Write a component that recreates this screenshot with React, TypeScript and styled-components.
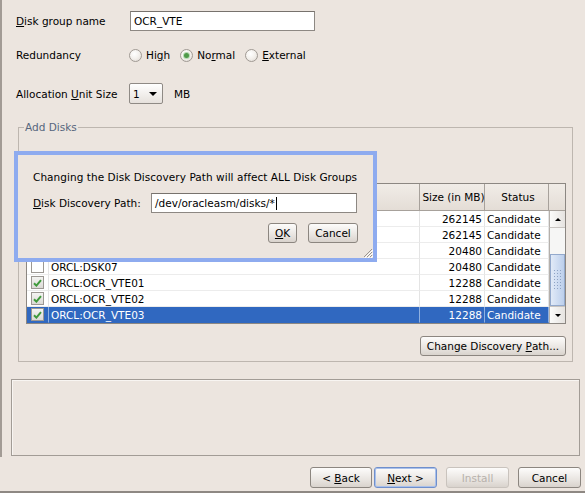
import React from "react";
import styled, { createGlobalStyle, css } from "styled-components";

const BG = "#ece5df";

const Global = createGlobalStyle`
  html, body { margin: 0; padding: 0; background: ${BG}; }
  body { font-family: "DejaVu Sans", "Liberation Sans", sans-serif; font-size: 10.5px; color: #000; }
  * { box-sizing: border-box; }
`;

const Window = styled.div`
  position: relative;
  width: 585px;
  height: 493px;
  background: ${BG};
  display: flex;
  flex-direction: column;
  border-bottom: 2px solid #8e8883;
  overflow: hidden;
`;

const Content = styled.div`
  border-left: 2px solid #a29b95;
  padding: 11px 0 1px 0;
  display: flex;
  flex-direction: column;
`;

const FormRow = styled.div<{ $top?: number; $h?: number }>`
  display: flex;
  align-items: center;
  margin: ${(p) => p.$top ?? 0}px 0 0 14px;
  height: ${(p) => p.$h ?? 20}px;
`;

const Label = styled.span<{ $w: number }>`
  width: ${(p) => p.$w}px;
  flex: none;
  white-space: nowrap;
`;

const U = styled.span`
  text-decoration: underline;
  text-underline-offset: 1px;
`;

const TextField = styled.div<{ $w: number }>`
  width: ${(p) => p.$w}px;
  height: 20px;
  background: #fff;
  border: 1px solid #8d8883;
  border-top-color: #77726d;
  padding: 0 3px;
  display: flex;
  align-items: center;
  white-space: nowrap;
`;

const Caret = styled.span`
  display: inline-block;
  width: 1px;
  height: 13px;
  background: #000;
  margin-left: 1px;
`;

const RadioGroup = styled.div`
  display: flex;
  align-items: center;
  gap: 10px;
`;

const RadioItem = styled.label`
  display: flex;
  align-items: center;
  gap: 4px;
`;

const RadioCircle = styled.span<{ $on?: boolean }>`
  width: 13px;
  height: 13px;
  border-radius: 50%;
  border: 1px solid #a09a94;
  background: radial-gradient(circle at 40% 35%, #ffffff 0%, #f3f0ec 50%, #dcd6d0 100%);
  display: flex;
  align-items: center;
  justify-content: center;
  ${(p) =>
    p.$on &&
    css`
      &::after {
        content: "";
        width: 5px;
        height: 5px;
        border-radius: 50%;
        background: #4f9a4a;
        box-shadow: 0 0 0 1px #b6dab2;
      }
    `}
`;

const Combo = styled.div`
  width: 34px;
  height: 21px;
  border: 1px solid #8f8a85;
  border-radius: 2px;
  background: linear-gradient(#ffffff, #e6e1dc);
  display: flex;
  align-items: center;
  justify-content: space-between;
  padding: 0 5px 0 3px;
  margin-right: 11px;
`;

const Tri = styled.span<{ $up?: boolean; $s?: number }>`
  width: 0;
  height: 0;
  border-left: ${(p) => p.$s ?? 4}px solid transparent;
  border-right: ${(p) => p.$s ?? 4}px solid transparent;
  ${(p) =>
    p.$up
      ? css`border-bottom: ${p.$s ?? 4}px solid #000;`
      : css`border-top: ${p.$s ?? 4}px solid #000;`}
`;

const Group = styled.fieldset`
  margin: 17px 0 0 16px;
  width: 555px;
  border: 1px solid #bdb6af;
  padding: 0 6px 5px 7px;
  min-width: 0;
`;

const Legend = styled.legend`
  color: #56657d;
  padding: 0 1px;
  margin-left: -2px;
  line-height: 13px;
`;

const TableFrame = styled.div`
  margin-top: 49px;
  width: 540px;
  border: 1px solid #8c8782;
  display: flex;
  background: #fff;
`;

const TableMain = styled.div`
  display: flex;
  flex-direction: column;
  width: 522px;
`;

const cols = "22px 371px 65px 64px";

const HeaderRow = styled.div`
  display: grid;
  grid-template-columns: ${cols};
  height: 27px;
`;

const HeaderCell = styled.div`
  background: linear-gradient(#f1ece7, #e4ddd6);
  border-right: 1px solid #a7a19b;
  border-bottom: 1px solid #a7a19b;
  display: flex;
  align-items: center;
  justify-content: center;
  white-space: nowrap;
  padding-left: 3px;
`;

const BodyRow = styled.div<{ $sel?: boolean }>`
  display: grid;
  grid-template-columns: ${cols};
  height: 16px;
  background: ${(p) => (p.$sel ? "#3068c0" : "#fff")};
  color: ${(p) => (p.$sel ? "#fff" : "#000")};
`;

const Cell = styled.div<{ $align?: "left" | "right" | "center"; $sel?: boolean }>`
  border-right: 1px solid ${(p) => (p.$sel ? "#8fb0e0" : "#e4e4e4")};
  border-bottom: 1px solid ${(p) => (p.$sel ? "#3068c0" : "#ececec")};
  display: flex;
  align-items: center;
  justify-content: ${(p) =>
    p.$align === "right" ? "flex-end" : p.$align === "center" ? "center" : "flex-start"};
  padding: 0 2px;
  white-space: nowrap;
  overflow: hidden;
`;

const Check = styled.span<{ $on?: boolean }>`
  width: 13px;
  height: 13px;
  border: 1px solid #9c9893;
  background: ${(p) => (p.$on ? "linear-gradient(#f4f4f2, #dcdad6)" : "#fff")};
  display: flex;
  align-items: center;
  justify-content: center;
`;

const ScrollCol = styled.div`
  width: 16px;
  display: flex;
  flex-direction: column;
`;

const Corner = styled.div`
  height: 27px;
  background: linear-gradient(#f1ece7, #e4ddd6);
  border-bottom: 1px solid #a7a19b;
`;

const ScrollBtn = styled.div`
  height: 16px;
  background: linear-gradient(90deg, #fbfbfa, #e6e3e0);
  border-left: 1px solid #b5b0ab;
  display: flex;
  align-items: center;
  justify-content: center;
`;

const Track = styled.div`
  flex: 1;
  background: #f6f6f5;
  border-left: 1px solid #b5b0ab;
  border-top: 1px solid #c8c4c0;
  border-bottom: 1px solid #c8c4c0;
  display: flex;
  flex-direction: column;
`;

const Thumb = styled.div`
  margin-top: 26px;
  flex: 1;
  background: linear-gradient(90deg, #e1eaf7, #bccfec);
  border: 1px solid #93a9cc;
  display: flex;
  align-items: center;
  justify-content: center;
`;

const Grip = styled.div`
  width: 9px;
  height: 22px;
  background-image: radial-gradient(circle, #8ea3c4 0.8px, transparent 1px);
  background-size: 3px 3px;
`;

const Button = styled.button<{ $w: number; $h?: number; $def?: boolean; $disabled?: boolean }>`
  width: ${(p) => p.$w}px;
  height: ${(p) => p.$h ?? 20}px;
  font: inherit;
  color: ${(p) => (p.$disabled ? "#b7b1ab" : "#000")};
  background: linear-gradient(#fdfcfb, #e9e5e1 60%, #d9d3cd);
  border: 1px solid ${(p) => (p.$def ? "#6f8fcc" : p.$disabled ? "#c9c3bd" : "#8c8680")};
  ${(p) => p.$def && css`box-shadow: inset 0 0 0 1px #a9c0ea;`}
  border-radius: 3px;
  padding: 0;
  display: flex;
  align-items: center;
  justify-content: center;
  white-space: pre;
  flex: none;
`;

const ButtonBar = styled.div`
  display: flex;
  justify-content: flex-end;
  margin-top: 12px;
`;

const MessageBox = styled.div`
  margin: 17px 0 0 9px;
  width: 569px;
  height: 77px;
  border: 1px solid #a29c96;
  box-shadow: inset 1px 1px 0 #f8f5f2;
`;

const Footer = styled.div`
  display: flex;
  justify-content: flex-end;
  align-items: center;
  margin-top: 10px;
  padding-right: 4px;
  height: 21px;
`;

const FooterGap = styled.span<{ $w: number }>`
  width: ${(p) => p.$w}px;
  flex: none;
`;

const Dialog = styled.div`
  position: absolute;
  left: 14px;
  top: 151px;
  width: 363px;
  height: 111px;
  border: 4px solid #8eabef;
  background: ${BG};
  padding: 16px 15px 0 15px;
  display: flex;
  flex-direction: column;
`;

const DialogText = styled.div`
  line-height: 13px;
  white-space: nowrap;
  letter-spacing: 0.05px;
`;

const DialogRow = styled.div`
  display: flex;
  align-items: center;
  margin-top: 9px;
`;

const DialogButtons = styled.div`
  display: flex;
  justify-content: flex-end;
  gap: 11px;
  margin-top: 10px;
`;

const ResizeGrip = styled.svg`
  position: absolute;
  right: 0;
  bottom: 0;
`;

const rows = [
  { name: "ORCL:DSK01", size: "262145", on: false },
  { name: "ORCL:DSK02", size: "262145", on: false },
  { name: "ORCL:DSK06", size: "20480", on: false },
  { name: "ORCL:DSK07", size: "20480", on: false },
  { name: "ORCL:OCR_VTE01", size: "12288", on: true },
  { name: "ORCL:OCR_VTE02", size: "12288", on: true },
  { name: "ORCL:OCR_VTE03", size: "12288", on: true, sel: true },
];

const CheckMark = () => (
  <svg width="9" height="8" viewBox="0 0 9 8">
    <path d="M1 4.2 L3.4 6.6 L8 1.2" fill="none" stroke="#3f9a3c" strokeWidth="2" />
  </svg>
);

export default function App() {
  return (
    <Window>
      <Global />
      <Content>
        <FormRow $h={20}>
          <Label $w={114}>
            <U>D</U>isk group name
          </Label>
          <TextField $w={185}>OCR_VTE</TextField>
        </FormRow>
        <FormRow $top={14} $h={20}>
          <Label $w={113}>Redundancy</Label>
          <RadioGroup>
            <RadioItem>
              <RadioCircle />
              <span>
                Hi<U>g</U>h
              </span>
            </RadioItem>
            <RadioItem>
              <RadioCircle $on />
              <span>
                No<U>r</U>mal
              </span>
            </RadioItem>
            <RadioItem>
              <RadioCircle />
              <span>
                <U>E</U>xternal
              </span>
            </RadioItem>
          </RadioGroup>
        </FormRow>
        <FormRow $top={18} $h={21}>
          <Label $w={113}>
            Allocation <U>U</U>nit Size
          </Label>
          <Combo>
            <span>1</span>
            <Tri />
          </Combo>
          <span>MB</span>
        </FormRow>

        <Group>
          <Legend>Add Disks</Legend>
          <TableFrame>
            <TableMain>
              <HeaderRow>
                <HeaderCell />
                <HeaderCell />
                <HeaderCell>Size (in MB)</HeaderCell>
                <HeaderCell>Status</HeaderCell>
              </HeaderRow>
              {rows.map((r) => (
                <BodyRow key={r.name} $sel={r.sel}>
                  <Cell $align="center" $sel={r.sel}>
                    <Check $on={r.on}>{r.on && <CheckMark />}</Check>
                  </Cell>
                  <Cell $sel={r.sel}>{r.name}</Cell>
                  <Cell $align="right" $sel={r.sel}>
                    {r.size}
                  </Cell>
                  <Cell $sel={r.sel}>Candidate</Cell>
                </BodyRow>
              ))}
            </TableMain>
            <ScrollCol>
              <Corner />
              <ScrollBtn>
                <Tri $up $s={3} />
              </ScrollBtn>
              <Track>
                <Thumb>
                  <Grip />
                </Thumb>
              </Track>
              <ScrollBtn>
                <Tri $s={3} />
              </ScrollBtn>
            </ScrollCol>
          </TableFrame>
          <ButtonBar>
            <Button $w={146} $h={20}>
              Change Discovery <U>P</U>ath...
            </Button>
          </ButtonBar>
        </Group>

        <MessageBox />
      </Content>

      <Footer>
        <Button $w={62} $h={21}>
          {"< "}
          <U>B</U>ack
        </Button>
        <FooterGap $w={2} />
        <Button $w={63} $h={21} $def>
          <U>N</U>
          {"ext >"}
        </Button>
        <FooterGap $w={9} />
        <Button $w={63} $h={21} $disabled>
          Install
        </Button>
        <FooterGap $w={9} />
        <Button $w={63} $h={21}>
          Cancel
        </Button>
      </Footer>

      <Dialog>
        <DialogText>Changing the Disk Discovery Path will affect ALL Disk Groups</DialogText>
        <DialogRow>
          <Label $w={118}>
            <U>D</U>isk Discovery Path:
          </Label>
          <TextField $w={206}>
            /dev/oracleasm/disks/*
            <Caret />
          </TextField>
        </DialogRow>
        <DialogButtons>
          <Button $w={29}>
            <U>O</U>K
          </Button>
          <Button $w={50}>Cancel</Button>
        </DialogButtons>
        <ResizeGrip width="11" height="11" viewBox="0 0 11 11">
          <path d="M10 2 L2 10 M10 5 L5 10 M10 8 L8 10" stroke="#9a948e" strokeWidth="1" />
          <path d="M11 3 L3 11 M11 6 L6 11 M11 9 L9 11" stroke="#ffffff" strokeWidth="1" />
        </ResizeGrip>
      </Dialog>
    </Window>
  );
}
